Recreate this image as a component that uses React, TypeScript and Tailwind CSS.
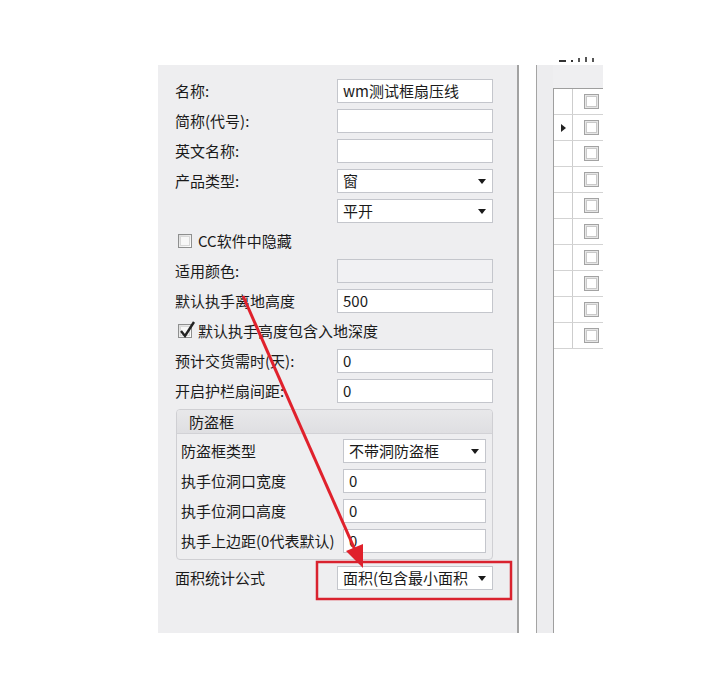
const font = { fontFamily: '"Noto Sans CJK SC", "Noto Sans", sans-serif' };

function Caret() {
  return (
    <svg width="8" height="5" viewBox="0 0 8 5" className="shrink-0">
      <polygon points="0,0 8,0 4,5" fill="#1a1a1a" />
    </svg>
  );
}

function TextBox({ value = "", disabled = false, w = "w-[156px]" }: { value?: string; disabled?: boolean; w?: string }) {
  return (
    <div
      className={`${w} h-[24px] border border-[#c4c6cc] px-[5px] leading-[22px] text-[15px] text-[#1a1a1a] ${disabled ? "bg-[#f1f1f3]" : "bg-white"}`}
    >
      {value}
    </div>
  );
}

function Select({ value, w = "w-[156px]" }: { value: string; w?: string }) {
  return (
    <div className={`${w} h-[24px] border border-[#c4c6cc] bg-white pl-[5px] pr-[6px] flex items-center justify-between`}>
      <span className="text-[15px] leading-[22px] text-[#1a1a1a] whitespace-nowrap overflow-hidden">{value}</span>
      <Caret />
    </div>
  );
}

function Row({ label, children }: { label: string; children: React.ReactNode }) {
  return (
    <div className="flex h-[24px] items-center">
      <div className="w-[162px] text-[15px] leading-[24px] text-[#1a1a1a] whitespace-nowrap">{label}</div>
      {children}
    </div>
  );
}

function Check({ checked, label }: { checked?: boolean; label: string }) {
  return (
    <div className="flex h-[24px] items-center pl-[3px]">
      <div className="relative w-[14px] h-[14px] border border-[#8e8f8f] bg-gradient-to-br from-[#dcdcdc] to-white flex items-center justify-center">
        <div className="w-[10px] h-[10px] border border-[#d8d8d8] bg-[#f7f7f7]" />
        {checked && (
          <svg width="18" height="18" viewBox="0 0 18 18" className="absolute -top-[4px] -left-[1px]">
            <path d="M3 10 L7 15 L16 1" stroke="#222" strokeWidth="2.4" fill="none" />
          </svg>
        )}
      </div>
      <span className="ml-[6px] text-[15px] leading-[24px] text-[#1a1a1a] whitespace-nowrap">{label}</span>
    </div>
  );
}

function GridCheck() {
  return (
    <div className="w-[15px] h-[15px] border border-[#a3a3a3] bg-[#e6e6e6] flex items-center justify-center">
      <div className="w-[11px] h-[11px] border border-[#c9c9c9] bg-white" />
    </div>
  );
}

export default function App() {
  const rows = Array.from({ length: 10 });
  return (
    <div className="relative w-[724px] h-[685px] bg-white overflow-hidden" style={font}>
      <div className="flex pt-[65px] pl-[158px]">
        {/* left form panel */}
        <div className="w-[361px] h-[568px] bg-[#eeeef0] border-r-2 border-[#a2a2a2] pl-[17px] pt-[14px] flex flex-col gap-[6px]">
          <Row label="名称:">
            <TextBox value="wm测试框扇压线" />
          </Row>
          <Row label="简称(代号):">
            <TextBox />
          </Row>
          <Row label="英文名称:">
            <TextBox />
          </Row>
          <Row label="产品类型:">
            <Select value="窗" />
          </Row>
          <Row label="">
            <Select value="平开" />
          </Row>
          <Check label="CC软件中隐藏" />
          <Row label="适用颜色:">
            <TextBox disabled />
          </Row>
          <Row label="默认执手离地高度">
            <TextBox value="500" />
          </Row>
          <Check checked label="默认执手高度包含入地深度" />
          <Row label="预计交货需时(天):">
            <TextBox value="0" />
          </Row>
          <Row label="开启护栏扇间距:">
            <TextBox value="0" />
          </Row>

          {/* group box */}
          <div className="ml-[1px] w-[317px] h-[151px] border border-[#cfcfd3] rounded-[4px] flex flex-col">
            <div className="h-[24px] bg-gradient-to-b from-[#e8e8ea] to-[#dfdfe2] rounded-t-[3px] border-b border-[#d2d2d6] pl-[12px] text-[15px] leading-[23px] text-[#1a1a1a]">
              防盗框
            </div>
            <div className="pl-[4px] pt-[5px] flex flex-col gap-[6px]">
              <Row label="防盗框类型">
                <Select value="不带洞防盗框" w="w-[143px]" />
              </Row>
              <Row label="执手位洞口宽度">
                <TextBox value="0" w="w-[143px]" />
              </Row>
              <Row label="执手位洞口高度">
                <TextBox value="0" w="w-[143px]" />
              </Row>
              <Row label="执手上边距(0代表默认)">
                <TextBox value="0" w="w-[143px]" />
              </Row>
            </div>
          </div>

          <Row label="面积统计公式">
            <Select value="面积(包含最小面积" />
          </Row>
        </div>

        <div className="w-[17px]" />

        {/* right grid panel */}
        <div className="relative w-[67px] h-[568px] border-l border-[#a4a4a4] flex">
          <div className="absolute -top-[8px] left-[22px] flex items-end gap-[5px]">
            <div className="w-[7px] h-[2px] bg-[#333]" />
            <div className="w-[2px] h-[2px] bg-[#333]" />
            <div className="w-[2px] h-[4px] bg-[#555]" />
            <div className="w-[2px] h-[5px] bg-[#555]" />
            <div className="w-[2px] h-[4px] bg-[#555]" />
          </div>
          <div className="w-[16px] h-full bg-[#ededef]" />
          <div className="flex-1 flex flex-col">
            <div className="h-[23px] bg-[#efeff1]" />
            <div className="flex-1 border-l border-t border-[#9f9f9f] bg-white">
              {rows.map((_, i) => (
                <div key={i} className="flex h-[26px] border-b border-[#d3d3d3]">
                  <div className="w-[19px] border-r border-[#cdcdcd] flex items-center justify-center">
                    {i === 1 && (
                      <svg width="5" height="8" viewBox="0 0 5 8">
                        <polygon points="0,0 5,4 0,8" fill="#222" />
                      </svg>
                    )}
                  </div>
                  <div className="flex-1 flex items-center pl-[11px]">
                    <GridCheck />
                  </div>
                </div>
              ))}
            </div>
          </div>
        </div>
      </div>

      {/* annotation overlay */}
      <svg className="absolute inset-0 pointer-events-none" width="724" height="685" viewBox="0 0 724 685">
        <line x1="243" y1="296" x2="355" y2="550" stroke="#e0212c" strokeWidth="3" />
        <polygon points="363,568 346,551 363,544" fill="#e0212c" />
        <rect x="317" y="562" width="194" height="37" fill="none" stroke="#d9222e" strokeWidth="2.5" />
      </svg>
    </div>
  );
}
